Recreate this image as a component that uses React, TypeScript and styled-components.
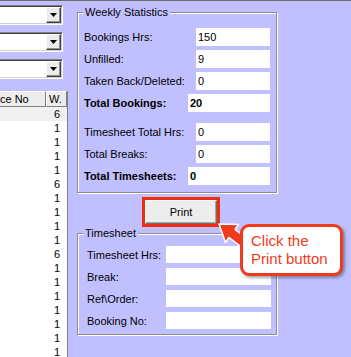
import styled, { createGlobalStyle } from "styled-components";

const GlobalStyle = createGlobalStyle`
  html, body {
    margin: 0;
    padding: 0;
  }
  body {
    font-family: "Liberation Sans", Arial, sans-serif;
  }
`;

const Screen = styled.div`
  position: relative;
  width: 351px;
  height: 357px;
  overflow: hidden;
  box-sizing: border-box;
  background: #c0c0ff;
  border-top: 1px solid #6e6e6e;
  display: flex;
  font-size: 11px;
  color: #000;
`;

const LeftPane = styled.div`
  width: 68px;
  flex-shrink: 0;
  display: flex;
  flex-direction: column;
  gap: 7px;
  padding-top: 4px;
`;

const Combo = styled.div`
  flex-shrink: 0;
  width: 63px;
  height: 20px;
  box-sizing: border-box;
  background: #fff;
  border-top: 1px solid #808080;
  border-right: 1px solid #fff;
  border-bottom: 1px solid #fff;
  box-shadow: inset 0 1px 0 #404040, inset -1px -1px 0 #d4d0c8;
  display: flex;
  justify-content: flex-end;
  padding: 1px 1px 1px 0;
`;

const DropButton = styled.div`
  width: 15px;
  box-sizing: border-box;
  background: #ececec;
  border: 1px solid;
  border-color: #fff #404040 #404040 #fff;
  box-shadow: inset -1px -1px 0 #909090;
  display: flex;
  align-items: center;
  justify-content: center;
`;

const Grid = styled.div`
  margin-top: 5px;
  flex: 1;
  min-height: 0;
  overflow: hidden;
  width: 67px;
  background: #fff;
  border-right: 1px solid #808080;
`;

const GridRow = styled.div<{ $shade?: boolean }>`
  display: flex;
  height: 14px;
  line-height: 15px;
  background: ${(p) => (p.$shade ? "#f0f0f0" : "#fff")};
`;

const HeaderRow = styled.div`
  display: flex;
  height: 16px;
`;

const HeaderCell = styled.div<{ $w: number; $pad: number }>`
  width: ${(p) => p.$w}px;
  box-sizing: border-box;
  background: #ececec;
  border-top: 1px solid #fff;
  border-left: ${(p) => (p.$pad ? "1px solid #fff" : "none")};
  border-right: 1px solid #808080;
  border-bottom: 1px solid #808080;
  padding-left: ${(p) => p.$pad}px;
  line-height: 14px;
  white-space: nowrap;
  overflow: hidden;
`;

const Cell = styled.div<{ $w: number }>`
  width: ${(p) => p.$w}px;
  box-sizing: border-box;
  text-align: right;
  padding-right: 7px;
`;

const RightPane = styled.div`
  margin-left: 9px;
  width: 200px;
  display: flex;
  flex-direction: column;
`;

const Group = styled.fieldset<{ $top: number; $right: number; $ptop: number; $pbottom: number }>`
  margin: ${(p) => p.$top}px 0 0 0;
  min-width: 0;
  padding: ${(p) => p.$ptop}px ${(p) => p.$right}px ${(p) => p.$pbottom}px 6px;
  border: 1px solid #8c8c8c;
  box-shadow: 1px 1px 0 #fff, inset 1px 1px 0 #fff;
`;

const Legend = styled.legend`
  padding: 0 2px;
  margin-left: -1px;
  line-height: 13px;
  background: #c0c0ff;
`;

const Row = styled.div<{ $h: number; $gap: number; $extra?: number }>`
  display: flex;
  align-items: center;
  height: ${(p) => p.$h}px;
  margin-top: ${(p) => p.$extra || 0}px;
  margin-bottom: ${(p) => p.$gap}px;
  &:last-child {
    margin-bottom: 0;
  }
`;

const Label = styled.div<{ $w: number; $bold?: boolean; $indent?: number }>`
  width: ${(p) => p.$w}px;
  flex-shrink: 0;
  box-sizing: border-box;
  padding-left: ${(p) => p.$indent || 0}px;
  font-weight: ${(p) => (p.$bold ? "bold" : "normal")};
  white-space: nowrap;
`;

const Field = styled.div<{ $bold?: boolean }>`
  flex: 1;
  align-self: stretch;
  background: #fff;
  padding-left: 2px;
  display: flex;
  align-items: center;
  font-weight: ${(p) => (p.$bold ? "bold" : "normal")};
`;

const Highlight = styled.div`
  align-self: flex-start;
  margin: 4px 0 0 65px;
  border: 3px solid #ef2b10;
  display: flex;
`;

const Button = styled.button`
  width: 72px;
  height: 24px;
  margin: 0;
  padding: 0;
  font-family: inherit;
  font-size: 11px;
  color: #000;
  background: #ededed;
  border: 1px solid;
  border-color: #fff #6e6e6e #6e6e6e #fff;
  box-shadow: inset -1px -1px 0 #a8a8a8;
`;

const Arrow = styled.svg`
  position: absolute;
  left: 210px;
  top: 210px;
`;

const Callout = styled.div`
  position: absolute;
  left: 240px;
  top: 223px;
  width: 103px;
  height: 52px;
  box-sizing: border-box;
  background: #fff;
  border: 3px solid #ef3a1d;
  border-radius: 9px;
  box-shadow: 2px 2px 3px rgba(0, 0, 0, 0.35);
  padding: 5px 0 0 8px;
  color: #ef3a1d;
  font-size: 15px;
  line-height: 18px;
`;

const values = [6, 1, 1, 1, 1, 6, 1, 1, 1, 1, 6, 1, 1, 1, 1, 1, 1, 1];

const weekly = [
  { label: "Bookings Hrs:", value: "150" },
  { label: "Unfilled:", value: "9" },
  { label: "Taken Back/Deleted:", value: "0" },
  { label: "Total Bookings:", value: "20", bold: true, gap: 5 },
  { label: "Timesheet Total Hrs:", value: "0", extra: 11 },
  { label: "Total Breaks:", value: "0" },
  { label: "Total Timesheets:", value: "0", bold: true },
];

const timesheet = ["Timesheet Hrs:", "Break:", "Ref\\Order:", "Booking No:"];

const Triangle = () => (
  <svg width="7" height="4" viewBox="0 0 7 4">
    <polygon points="0,0 7,0 3.5,4" fill="#000" />
  </svg>
);

export default function App() {
  return (
    <>
      <GlobalStyle />
      <Screen>
        <LeftPane>
          {[0, 1, 2].map((i) => (
            <Combo key={i}>
              <DropButton>
                <Triangle />
              </DropButton>
            </Combo>
          ))}
          <Grid>
            <HeaderRow>
              <HeaderCell $w={46} $pad={0}>
                ce No
              </HeaderCell>
              <HeaderCell $w={21} $pad={2}>
                W.
              </HeaderCell>
            </HeaderRow>
            {values.map((v, i) => (
              <GridRow key={i} $shade={i === 0}>
                <Cell $w={46} />
                <Cell $w={21}>{v}</Cell>
              </GridRow>
            ))}
          </Grid>
        </LeftPane>

        <RightPane>
          <Group $top={5} $right={6} $ptop={9} $pbottom={7}>
            <Legend>Weekly Statistics</Legend>
            {weekly.map((r, i) => (
              <Row
                key={r.label}
                $h={18}
                $gap={r.gap ?? 4}
                $extra={i === 3 ? 1 : r.extra}
              >
                <Label $w={r.bold ? 104 : 112} $bold={r.bold}>
                  {r.label}
                </Label>
                <Field $bold={r.bold}>{r.value}</Field>
              </Row>
            ))}
          </Group>

          <Highlight>
            <Button>Print</Button>
          </Highlight>

          <Group $top={0} $right={5} $ptop={6} $pbottom={5}>
            <Legend>Timesheet</Legend>
            {timesheet.map((l) => (
              <Row key={l} $h={17} $gap={5}>
                <Label $w={82} $indent={3}>
                  {l}
                </Label>
                <Field />
              </Row>
            ))}
          </Group>
        </RightPane>

        <Arrow width="45" height="45" viewBox="0 0 45 45">
          <polygon
            points="9,13 28.5,13.5 25,18.5 37.6,28.2 31.6,36.2 19,26.5 15.5,31.5"
            fill="#ef3a1d"
            stroke="#fff"
            strokeWidth="1.5"
            strokeLinejoin="round"
          />
        </Arrow>
        <Callout>
          Click the
          <br />
          Print button
        </Callout>
      </Screen>
    </>
  );
}
